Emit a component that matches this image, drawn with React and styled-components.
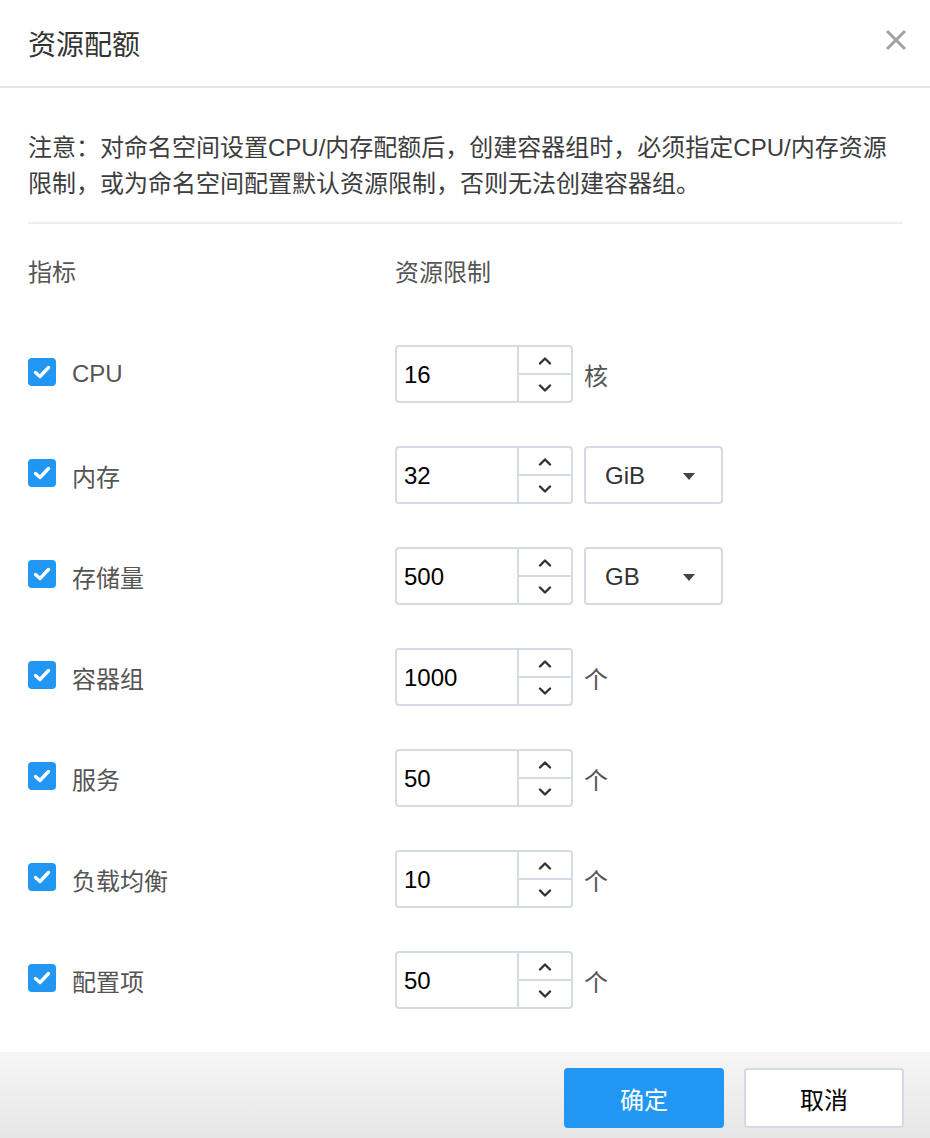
import React, {useState} from 'react';
import styled, {createGlobalStyle} from 'styled-components';

const GlobalStyle = createGlobalStyle`
    * {
        box-sizing: border-box;
    }
    body {
        margin: 0;
        background: #fff;
        font-family: "Liberation Sans", "Noto Sans CJK SC", sans-serif;
    }
`

const Dialog = styled.div`
    width: 930px;
    min-height: 1138px;
    display: flex;
    flex-direction: column;
    background: #fff;
`

const Header = styled.div`
    height: 88px;
    display: flex;
    align-items: center;
    justify-content: space-between;
    padding: 0 23px 0 28px;
    border-bottom: 2px solid #e3e3e3;

    h1 {
        margin: 0;
        font-size: 28px;
        font-weight: 400;
        color: #333;
    }
`

const CloseButton = styled.button`
    width: 22px;
    height: 22px;
    padding: 0;
    border: none;
    background: none;
    margin-top: -6px;
    color: #9ea3a8;
    cursor: pointer;
    display: flex;
`

const Body = styled.div`
    flex: 1;
    padding: 42px 27px 43px 28px;
`

const Notice = styled.p`
    margin: 0;
    padding-bottom: 20px;
    border-bottom: 2px solid #efefef;
    font-size: 24px;
    line-height: 36px;
    color: #3d3d3d;
`

const Columns = styled.div`
    display: grid;
    grid-template-columns: 367px 1fr;
    align-items: center;
`

const ColumnHeader = styled(Columns)`
    margin-top: 31px;
    font-size: 24px;
    line-height: 36px;
    color: #555;
`

const RowList = styled.div`
    margin-top: 54px;
    display: flex;
    flex-direction: column;
    gap: 43px;
`

const Row = styled(Columns)`
    height: 58px;
`

const Metric = styled.label`
    display: flex;
    align-items: center;
    gap: 16px;
    font-size: 24px;
    color: #555;
    cursor: pointer;
`

const CheckBox = styled.span`
    width: 28px;
    height: 28px;
    margin-top: -4px;
    border-radius: 4px;
    display: flex;
    align-items: center;
    justify-content: center;
    background: ${p => p.checked ? '#2196f3' : '#fff'};
    border: ${p => p.checked ? 'none' : '2px solid #ccd5e0'};
`

const Limit = styled.div`
    display: flex;
    align-items: center;
    gap: 11px;
`

const NumberBox = styled.div`
    width: 178px;
    height: 58px;
    display: flex;
    border: 2px solid #d3dbe5;
    border-radius: 4px;
    background: #fff;

    input {
        flex: 1;
        min-width: 0;
        border: none;
        outline: none;
        background: none;
        padding: 2px 0 0 7px;
        font-family: inherit;
        font-size: 24px;
        color: #000;
    }
`

const Spinner = styled.div`
    width: 54px;
    display: flex;
    flex-direction: column;
    border-left: 2px solid #d3dbe5;

    button {
        flex: 1;
        padding: 0;
        border: none;
        background: none;
        display: flex;
        align-items: center;
        justify-content: center;
        color: #333;
        cursor: pointer;

        &:first-child {
            border-bottom: 2px solid #d3dbe5;
        }
    }
`

const Select = styled.div`
    width: 139px;
    height: 58px;
    display: flex;
    align-items: center;
    justify-content: space-between;
    padding: 2px 26px 0 19px;
    border: 2px solid #d3dbe5;
    border-radius: 4px;
    font-size: 24px;
    color: #333;
    cursor: pointer;
`

const Unit = styled.span`
    font-size: 24px;
    color: #555;
`

const Footer = styled.div`
    height: 86px;
    display: flex;
    justify-content: flex-end;
    gap: 20px;
    padding: 16px 26px 0;
    background: linear-gradient(#f6f6f6, #e6e6e6);
`

const Button = styled.button`
    width: 160px;
    height: 60px;
    border-radius: 4px;
    font-family: inherit;
    font-size: 24px;
    cursor: pointer;
    color: ${p => p.primary ? '#fff' : '#000'};
    background: ${p => p.primary ? '#2196f3' : '#fff'};
    border: ${p => p.primary ? 'none' : '2px solid #d3dbe5'};
`

const Chevron = ({up}) => (
    <svg width="14" height="9" viewBox="0 0 14 9">
        <path d={up ? 'M2 7.5 L7 2.5 L12 7.5' : 'M2 1.5 L7 6.5 L12 1.5'} fill="none" stroke="currentColor" strokeWidth="2.4" strokeLinecap="round" strokeLinejoin="round"/>
    </svg>
)

const NumberInput = ({value, onChange}) => (
    <NumberBox>
        <input value={value} onChange={e => onChange(e.target.value.replace(/\D/g, ''))}/>
        <Spinner>
            <button onClick={() => onChange(String(Number(value) + 1))}><Chevron up/></button>
            <button onClick={() => onChange(String(Math.max(0, Number(value) - 1)))}><Chevron/></button>
        </Spinner>
    </NumberBox>
)

const initialRows = [
    {key: 'cpu', name: 'CPU', value: '16', unit: '核'},
    {key: 'memory', name: '内存', value: '32', select: 'GiB'},
    {key: 'storage', name: '存储量', value: '500', select: 'GB'},
    {key: 'pods', name: '容器组', value: '1000', unit: '个'},
    {key: 'services', name: '服务', value: '50', unit: '个'},
    {key: 'lb', name: '负载均衡', value: '10', unit: '个'},
    {key: 'configmaps', name: '配置项', value: '50', unit: '个'},
]

const App = () => {
    //STATE
    const [rows, setRows] = useState(initialRows.map(r => ({...r, checked: true})))

    //FUNCTIONS
    const update = (key, patch) => {
        setRows(rows.map(r => r.key === key ? {...r, ...patch} : r))
    }

    return (
        <>
            <GlobalStyle/>
            <Dialog>
                <Header>
                    <h1>资源配额</h1>
                    <CloseButton aria-label="关闭">
                        <svg width="22" height="22" viewBox="0 0 22 22">
                            <path d="M2 2 L20 20 M20 2 L2 20" stroke="currentColor" strokeWidth="3"/>
                        </svg>
                    </CloseButton>
                </Header>
                <Body>
                    <Notice>注意：对命名空间设置CPU/内存配额后，创建容器组时，必须指定CPU/内存资源限制，或为命名空间配置默认资源限制，否则无法创建容器组。</Notice>
                    <ColumnHeader>
                        <span>指标</span>
                        <span>资源限制</span>
                    </ColumnHeader>
                    <RowList>
                        {rows.map(r => (
                            <Row key={r.key}>
                                <Metric onClick={() => update(r.key, {checked: !r.checked})}>
                                    <CheckBox checked={r.checked}>
                                        {r.checked && (
                                            <svg width="18" height="14" viewBox="0 0 18 14">
                                                <path d="M2.5 7.5 L7 11.5 L15.5 2.5" fill="none" stroke="#fff" strokeWidth="3.4" strokeLinecap="round" strokeLinejoin="round"/>
                                            </svg>
                                        )}
                                    </CheckBox>
                                    {r.name}
                                </Metric>
                                <Limit>
                                    <NumberInput value={r.value} onChange={v => update(r.key, {value: v})}/>
                                    {r.select ? (
                                        <Select>
                                            <span>{r.select}</span>
                                            <svg width="12" height="7" viewBox="0 0 12 7">
                                                <path d="M0 0 H12 L6 7 Z" fill="#444"/>
                                            </svg>
                                        </Select>
                                    ) : (
                                        <Unit>{r.unit}</Unit>
                                    )}
                                </Limit>
                            </Row>
                        ))}
                    </RowList>
                </Body>
                <Footer>
                    <Button primary>确定</Button>
                    <Button>取消</Button>
                </Footer>
            </Dialog>
        </>
    )
}

export default App
